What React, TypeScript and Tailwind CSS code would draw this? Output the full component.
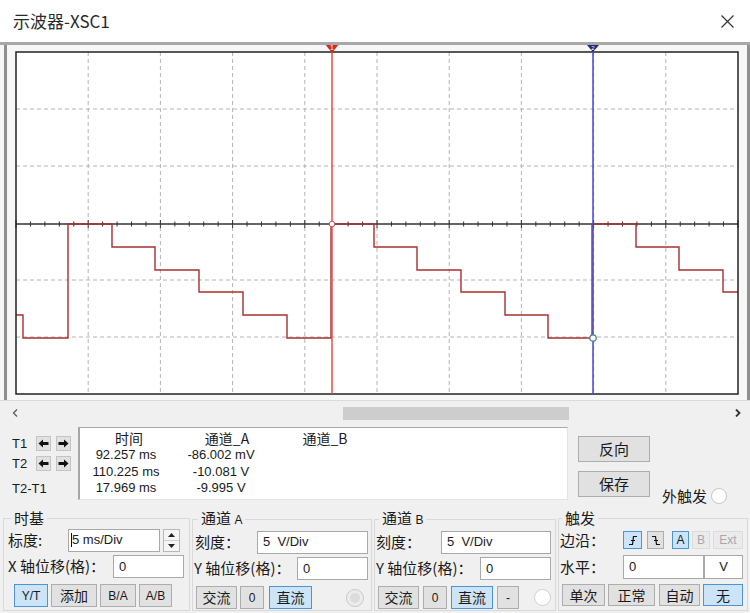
import React from 'react';

// font stacks
const cjk = "font-['Noto_Sans_CJK_SC',sans-serif]";
const lat = "font-['Liberation_Sans','Noto_Sans_CJK_SC',sans-serif]";

type BtnProps = {
  className?: string;
  active?: boolean;
  disabled?: boolean;
  children?: React.ReactNode;
};

const Btn: React.FC<BtnProps> = ({ className = '', active = false, disabled = false, children }) => {
  const tone = active
    ? 'bg-[#cce4f7] border-[#4e94d4] text-[#1a1a1a]'
    : disabled
    ? 'bg-[#ebebeb] border-[#dcdcdc] text-[#a8a8a8]'
    : 'bg-[#e1e1e1] border-[#adadad] text-[#1a1a1a]';
  return <div className={`flex items-center justify-center border ${tone} ${className}`}>{children}</div>;
};

const Field: React.FC<{ className?: string; children?: React.ReactNode }> = ({ className = '', children }) => (
  <div className={`h-[23px] bg-white border border-[#a9a9a9] flex items-center px-[5px] text-[13px] text-[#222] ${lat} ${className}`}>
    {children}
  </div>
);

const Group: React.FC<{ title: React.ReactNode; className?: string; legendClass?: string; children?: React.ReactNode }> = ({
  title,
  className = '',
  legendClass = '',
  children,
}) => (
  <fieldset className={`border border-[#d9d9d9] h-[103px] mt-[3px] ${className}`}>
    <legend className={`px-[3px] text-[15px] leading-[20px] text-[#1a1a1a] ${legendClass}`}>{title}</legend>
    {children}
  </fieldset>
);

const ArrowL = () => (
  <svg width="11" height="9" viewBox="0 0 11 9">
    <path d="M0.5,4.5 L5,0.5 V3 H10.5 V6 H5 V8.5 Z" fill="#111" />
  </svg>
);
const ArrowR = () => (
  <svg width="11" height="9" viewBox="0 0 11 9">
    <path d="M10.5,4.5 L6,0.5 V3 H0.5 V6 H6 V8.5 Z" fill="#111" />
  </svg>
);

const Plot: React.FC = () => {
  const left = 16;
  const top = 52;
  const w = 722;
  const h = 342;
  const dx = w / 10;
  const dy = h / 6;
  const wave =
    'M16,315 H23 V338 H68 V224 H112 V247 H155 V270 H199 V292 H243 V315 H287 V338 H331 V224 H374 V247 H417 V270 H461 V292 H505 V315 H548 V338 H592 V224 H636 V247 H679 V270 H723 V292 H738';
  return (
    <svg width="740" height="355" viewBox="7 45 740 355" className="block">
      <rect x={left} y={top} width={w} height={h} fill="#ffffff" />
      {Array.from({ length: 9 }, (_, i) => (
        <line key={'v' + i} x1={left + dx * (i + 1)} y1={top} x2={left + dx * (i + 1)} y2={top + h} stroke="#b4b4b4" strokeDasharray="4 3" />
      ))}
      {[1, 2, 4, 5].map((j) => (
        <line key={'h' + j} x1={left} y1={top + dy * j} x2={left + w} y2={top + dy * j} stroke="#b4b4b4" strokeDasharray="4 3" />
      ))}
      <line x1={left} y1={224} x2={left + w} y2={224} stroke="#333" strokeWidth="1.4" />
      {Array.from({ length: 51 }, (_, k) => {
        const x = left + k * (dx / 5);
        const s = k % 5 === 0 ? 4 : 2.5;
        return <line key={'t' + k} x1={x} y1={224 - s} x2={x} y2={224 + s} stroke="#333" strokeWidth="1" />;
      })}
      <path d={wave} fill="none" stroke="#a8302f" strokeWidth="1.4" />
      <rect x={left} y={top} width={w} height={h} fill="none" stroke="#222" strokeWidth="1.5" />
      {/* cursor 1 */}
      <line x1={332} y1={45} x2={332} y2={394} stroke="#e0504c" strokeWidth="1.5" />
      <polygon points="325,44 339,44 332,53" fill="#d42a24" />
      <text x="332" y="50" fontSize="7" fill="#fff" textAnchor="middle" fontFamily="Liberation Sans">1</text>
      <circle cx={332} cy={224} r={2.8} fill="#fff" stroke="#d05050" strokeWidth="1" />
      {/* cursor 2 */}
      <line x1={593} y1={45} x2={593} y2={394} stroke="#4646d6" strokeWidth="1.5" />
      <polygon points="587,45 599,45 593,52" fill="#20297a" />
      <text x="593" y="50" fontSize="6" fill="#fff" textAnchor="middle" fontFamily="Liberation Sans">2</text>
      <circle cx={593} cy={338} r={3.2} fill="#fff" stroke="#3a8080" strokeWidth="1.2" />
    </svg>
  );
};

const RisingEdge = () => (
  <svg width="10" height="11" viewBox="0 0 10 11">
    <path d="M1,9.5 H4.5 L5.5,1.5 H9 M3,5.5 H7" fill="none" stroke="#111" strokeWidth="1.2" />
  </svg>
);
const FallingEdge = () => (
  <svg width="10" height="11" viewBox="0 0 10 11">
    <path d="M1,1.5 H4.5 L5.5,9.5 H9 M3,5.5 H7" fill="none" stroke="#111" strokeWidth="1.2" />
  </svg>
);

export default function App() {
  return (
    <div className={`w-[750px] h-[613px] bg-[#f0f0f0] flex flex-col overflow-hidden ${cjk}`}>
      {/* title bar */}
      <div className="h-[45px] shrink-0 bg-white border-b-[3px] border-[#a8a8a8] flex items-center justify-between pl-[13px] pr-[16px]">
        <span className="text-[17px] text-[#2a2a2a]">示波器-XSC1</span>
        <svg width="13" height="13" viewBox="0 0 13 13">
          <path d="M0.5,0.5 L12.5,12.5 M12.5,0.5 L0.5,12.5" stroke="#333" strokeWidth="1.2" />
        </svg>
      </div>

      {/* plot frame */}
      <div className="h-[355px] shrink-0 flex bg-[#f7f7f7] pl-[4px]">
        <div className="border-l-[3px] border-r-[3px] border-[#8f8f8f] flex">
          <Plot />
        </div>
      </div>

      {/* horizontal scrollbar */}
      <div className="h-[25px] shrink-0 flex items-center border-t border-[#dadada]">
        <svg width="6" height="8" viewBox="0 0 6 8" className="ml-[12px]">
          <path d="M5,0.5 L1.5,4 L5,7.5" fill="none" stroke="#555" strokeWidth="1.2" />
        </svg>
        <div className="ml-[325px] w-[226px] h-[13px] bg-[#cdcdcd]" />
        <svg width="6" height="8" viewBox="0 0 6 8" className="ml-auto mr-[9px]">
          <path d="M1,0.5 L4.5,4 L1,7.5" fill="none" stroke="#333" strokeWidth="1.8" />
        </svg>
      </div>

      {/* cursor readout row */}
      <div className="h-[80px] shrink-0 flex">
        <div className={`ml-[5px] mt-[2px] w-[70px] h-[73px] pl-[7px] pt-[9px] text-[13px] text-[#1a1a1a] ${lat}`}>
          <div className="h-[15px] flex items-center">
            <span className="w-[24px]">T1</span>
            <div className="w-[15px] h-[15px] bg-[#e1e1e1] border border-[#c4c4c4] flex items-center justify-center"><ArrowL /></div>
            <div className="ml-[5px] w-[15px] h-[15px] bg-[#e1e1e1] border border-[#c4c4c4] flex items-center justify-center"><ArrowR /></div>
          </div>
          <div className="mt-[5px] h-[15px] flex items-center">
            <span className="w-[24px]">T2</span>
            <div className="w-[15px] h-[15px] bg-[#e1e1e1] border border-[#c4c4c4] flex items-center justify-center"><ArrowL /></div>
            <div className="ml-[5px] w-[15px] h-[15px] bg-[#e1e1e1] border border-[#c4c4c4] flex items-center justify-center"><ArrowR /></div>
          </div>
          <div className="mt-[10px] h-[16px] flex items-center">T2-T1</div>
        </div>

        <div className="ml-[3px] mt-[2px] w-[490px] h-[73px] bg-white border-t border-l-2 border-[#a6a6a6] border-r border-b border-r-[#e4e4e4] border-b-[#e4e4e4] pt-[1px] flex text-[#1a1a1a]">
          <div className="w-[92px] flex flex-col items-center">
            <div className="text-[14px] leading-[18px] pl-[6px]">时间</div>
            <div className={`text-[13px] leading-[16.5px] ${lat}`}>92.257 ms</div>
            <div className={`text-[13px] leading-[16.5px] ${lat}`}>110.225 ms</div>
            <div className={`text-[13px] leading-[16.5px] ${lat}`}>17.969 ms</div>
          </div>
          <div className="w-[98px] flex flex-col items-center">
            <div className="text-[14px] leading-[18px] pl-[12px]">通道_A</div>
            <div className={`text-[13px] leading-[16.5px] ${lat}`}>-86.002 mV</div>
            <div className={`text-[13px] leading-[16.5px] ${lat}`}>-10.081 V</div>
            <div className={`text-[13px] leading-[16.5px] ${lat}`}>-9.995 V</div>
          </div>
          <div className="w-[104px] flex flex-col items-center">
            <div className="text-[14px] leading-[18px] pl-[6px]">通道_B</div>
          </div>
        </div>

        <div className="ml-[10px] pt-[11px] flex flex-col gap-[9px]">
          <Btn className="w-[72px] h-[26px] text-[15px]">反向</Btn>
          <Btn className="w-[72px] h-[26px] text-[15px]">保存</Btn>
        </div>

        <div className="ml-[12px] mt-[62px] h-[18px] flex items-center text-[15px] text-[#1a1a1a]">
          <span>外触发</span>
          <div className="ml-[4px] w-[16px] h-[16px] rounded-full bg-white border border-[#c8c8c8]" />
        </div>
      </div>

      {/* settings groups */}
      <div className="h-[108px] shrink-0 flex text-[15px] text-[#1a1a1a]">
        <Group title="时基" className="ml-[3px] w-[187px]" legendClass="ml-[7px]">
          <div className="h-[24px] flex items-center pl-[4px]">
            <span className="w-[60px]">标度:</span>
            <Field className="w-[92px] border-[#3d8ee0] pl-[2px]">
              <span className="border-l border-[#111] pl-0 leading-[14px]">5 ms/Div</span>
            </Field>
            <div className="ml-[3px] w-[17px] h-[23px] border border-[#b8b8b8] bg-[#f5f5f5] flex flex-col">
              <div className="flex-1 flex items-center justify-center border-b border-[#d0d0d0]">
                <svg width="7" height="4" viewBox="0 0 7 4"><path d="M0,4 L3.5,0 L7,4 Z" fill="#222" /></svg>
              </div>
              <div className="flex-1 flex items-center justify-center">
                <svg width="7" height="4" viewBox="0 0 7 4"><path d="M0,0 L3.5,4 L7,0 Z" fill="#222" /></svg>
              </div>
            </div>
          </div>
          <div className="mt-[3px] h-[23px] flex items-center pl-[4px]">
            <span className="w-[105px]">X 轴位移(格)：</span>
            <Field className="w-[71px]">0</Field>
          </div>
          <div className={`mt-[6px] h-[23px] flex pl-[10px] gap-[3px] text-[12px] ${lat}`}>
            <Btn active className="w-[34px]">Y/T</Btn>
            <Btn className={`w-[46px] text-[14px] ${cjk}`}>添加</Btn>
            <Btn className="w-[36px]">B/A</Btn>
            <Btn className="w-[33px]">A/B</Btn>
          </div>
        </Group>

        <Group
          title={<>通道 <span className={`text-[12px] ${lat}`}>A</span></>}
          className="ml-[2px] w-[180px]"
          legendClass="ml-[5px]"
        >
          <div className="h-[24px] flex items-center pl-[2px]">
            <span className="w-[62px]">刻度：</span>
            <Field className="w-[111px]">5&nbsp;&nbsp;V/Div</Field>
          </div>
          <div className="mt-[3px] h-[23px] flex items-center pl-[1px]">
            <span className="w-[103px]">Y 轴位移(格)：</span>
            <Field className="w-[71px]">0</Field>
          </div>
          <div className="mt-[6px] h-[23px] flex items-center pl-[3px] text-[14px]">
            <Btn className="w-[41px] h-full">交流</Btn>
            <Btn className={`ml-[3px] w-[24px] h-full text-[12px] ${lat}`}>0</Btn>
            <Btn active className="ml-[5px] w-[43px] h-full">直流</Btn>
            <div className="ml-auto mr-[8px] w-[16px] h-[16px] rounded-full bg-[#dcdcdc] border-[3px] border-[#ececec] outline outline-1 outline-[#c8c8c8]" />
          </div>
        </Group>

        <Group
          title={<>通道 <span className={`text-[12px] ${lat}`}>B</span></>}
          className="ml-[2px] w-[182px]"
          legendClass="ml-[4px]"
        >
          <div className="h-[24px] flex items-center pl-[1px]">
            <span className="w-[65px]">刻度：</span>
            <Field className="w-[110px]">5&nbsp;&nbsp;V/Div</Field>
          </div>
          <div className="mt-[3px] h-[23px] flex items-center pl-[1px]">
            <span className="w-[104px]">Y 轴位移(格)：</span>
            <Field className="w-[71px]">0</Field>
          </div>
          <div className="mt-[6px] h-[23px] flex items-center pl-[3px] text-[14px]">
            <Btn className="w-[41px] h-full">交流</Btn>
            <Btn className={`ml-[4px] w-[24px] h-full text-[12px] ${lat}`}>0</Btn>
            <Btn active className="ml-[4px] w-[42px] h-full">直流</Btn>
            <Btn className={`ml-[4px] w-[22px] h-full text-[12px] ${lat}`}>-</Btn>
            <div className="ml-auto mr-[4px] w-[17px] h-[17px] rounded-full bg-white border border-[#cfcfcf]" />
          </div>
        </Group>

        <Group title="触发" className="ml-[2px] w-[190px]" legendClass="ml-[3px]">
          <div className="h-[24px] flex items-center pl-[1px]">
            <span className="w-[63px]">边沿：</span>
            <Btn active className="w-[19px] h-[18px]"><RisingEdge /></Btn>
            <Btn className="ml-[5px] w-[17px] h-[18px]"><FallingEdge /></Btn>
            <Btn active className={`ml-[8px] w-[17px] h-[18px] text-[12px] ${lat}`}>A</Btn>
            <Btn disabled className={`ml-[3px] w-[18px] h-[18px] text-[12px] ${lat}`}>B</Btn>
            <Btn disabled className={`ml-[3px] w-[30px] h-[18px] text-[12px] ${lat}`}>Ext</Btn>
          </div>
          <div className="mt-[3px] h-[24px] flex items-center pl-[1px]">
            <span className="w-[63px]">水平：</span>
            <Field className="w-[81px] h-[24px]">0</Field>
            <Field className="w-[39px] h-[24px] justify-center">V</Field>
          </div>
          <div className="mt-[5px] h-[22px] flex items-center pl-[3px] text-[14px]">
            <Btn className="w-[43px] h-full">单次</Btn>
            <Btn className="ml-[3px] w-[47px] h-full">正常</Btn>
            <Btn className="ml-[4px] w-[41px] h-full">自动</Btn>
            <Btn active className="ml-[3px] w-[40px] h-full">无</Btn>
          </div>
        </Group>
      </div>
    </div>
  );
}
